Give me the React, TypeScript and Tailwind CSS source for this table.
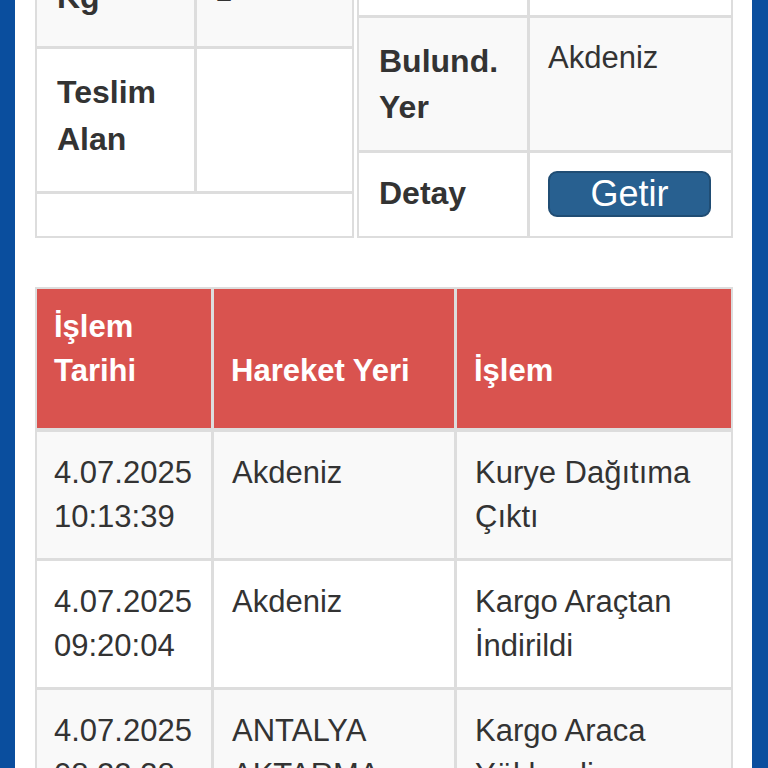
import React from 'react';

const history = [
  { date: '4.07.2025', time: '10:13:39', place: ['Akdeniz'], action: ['Kurye Dağıtıma', 'Çıktı'] },
  { date: '4.07.2025', time: '09:20:04', place: ['Akdeniz'], action: ['Kargo Araçtan', 'İndirildi'] },
  { date: '4.07.2025', time: '08:22:38', place: ['ANTALYA', 'AKTARMA'], action: ['Kargo Araca', 'Yüklendi'] }
];

function Lines({ lines }: { lines: string[] }) {
  return (
    <>
      {lines.map((l) =>
      <div key={l}>{l}</div>
      )}
    </>);

}

function InfoLeft() {
  return (
    <div className="grid w-[319px] grid-cols-[157px_155px] gap-[3px] bg-[#ddd] p-[2px]">
      <div className="h-[93px] bg-[#f9f9f9] px-[20px] pt-[21px] text-[32px] font-bold leading-[46px]">Kg</div>
      <div className="h-[93px] bg-[#f9f9f9] px-[18px] pt-[16px] text-[31px] leading-[44px]">1</div>
      <div className="h-[142px] bg-white px-[20px] pt-[20px] text-[32px] font-bold leading-[47px]">
        Teslim
        <br />
        Alan
      </div>
      <div className="h-[142px] bg-white" />
      <div className="col-span-2 h-[42px] bg-white" />
    </div>);

}

function InfoRight() {
  return (
    <div className="grid w-[376px] grid-cols-[168px_201px] gap-[3px] bg-[#ddd] p-[2px]">
      <div className="h-[62px] bg-white" />
      <div className="h-[62px] bg-white" />
      <div className="h-[132px] bg-[#f9f9f9] px-[20px] pt-[20px] text-[32px] font-bold leading-[46px]">
        Bulund.
        <br />
        Yer
      </div>
      <div className="h-[132px] bg-[#f9f9f9] px-[18px] pt-[18px] text-[31px] leading-[44px]">Akdeniz</div>
      <div className="flex h-[83px] items-center bg-white px-[20px] pb-[4px] text-[32px] font-bold leading-[46px]">Detay</div>
      <div className="flex h-[83px] items-center bg-white px-[18px] pb-[2px]">
        <button className="h-[46px] w-[163px] rounded-[9px] border-2 border-[#204d74] bg-[#286090] text-[36px] leading-[40px] text-white">
          Getir
        </button>
      </div>
    </div>);

}

function History() {
  return (
    <div className="mt-[49px] grid grid-cols-[174px_240px_274px] gap-[3px] bg-[#ddd] p-[2px] text-[31px] leading-[44px]">
      {['İşlem Tarihi', 'Hareket Yeri', 'İşlem'].map((h, i) =>
      <div
        key={h}
        className="mb-px flex h-[139px] flex-col justify-end bg-[#d9534f] px-[17px] pb-[35px] font-bold text-white">
          {i === 0 ? <Lines lines={['İşlem', 'Tarihi']} /> : h}
        </div>
      )}
      {history.map((row, i) => {
        const bg = i % 2 === 0 ? 'bg-[#f9f9f9]' : 'bg-white';
        return (
          <React.Fragment key={row.time}>
            <div className={`${bg} px-[17px] py-[19px]`}>
              <Lines lines={[row.date, row.time]} />
            </div>
            <div className={`${bg} px-[18px] py-[19px]`}>
              <Lines lines={row.place} />
            </div>
            <div className={`${bg} px-[18px] py-[19px]`}>
              <Lines lines={row.action} />
            </div>
          </React.Fragment>);

      })}
    </div>);

}

export default function App() {
  return (
    <div className="flex h-[768px] w-[768px] overflow-hidden bg-white font-['Liberation_Sans',Arial,sans-serif] text-[#333]">
      <div className="w-[15px] shrink-0 bg-[#0a4e9e]" />
      <main className="flex-1 pl-[20px] pr-[19px]">
        <div className="-mt-[49px] flex items-start gap-[3px]">
          <InfoLeft />
          <InfoRight />
        </div>
        <History />
      </main>
      <div className="w-[16px] shrink-0 bg-[#0a4e9e]" />
    </div>);

}
